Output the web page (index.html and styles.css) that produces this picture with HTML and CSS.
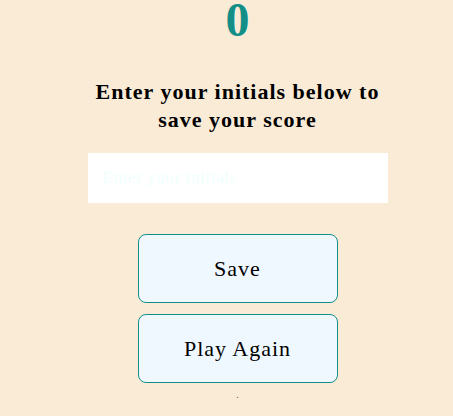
FILE: index.html
```html
<!DOCTYPE html>
<html>
<head>
<meta charset="utf-8">
<link rel="stylesheet" href="styles.css">
</head>
<body>
<main class="end-screen">
  <div class="score">0</div>
  <h2 class="prompt">Enter your initials below to save your score</h2>
  <input class="initials" type="text" placeholder="Enter your initials">
  <div class="actions">
    <button class="btn">Save</button>
    <button class="btn">Play Again</button>
  </div>
  <div class="dot">.</div>
</main>
</body>
</html>
```

FILE: styles.css
```css
html, body {
  margin: 0;
  padding: 0;
  background: #faebd7;
}
body {
  font-family: "Liberation Serif", "Times New Roman", serif;
  color: #000;
}
.end-screen {
  display: flex;
  flex-direction: column;
  align-items: center;
  padding-left: 22px;
}
.score {
  font-size: 48px;
  font-weight: bold;
  color: #138f88;
  line-height: 40px;
  margin-top: 0;
}
.prompt {
  margin: 38px 0 0;
  width: 300px;
  text-align: center;
  font-size: 22px;
  letter-spacing: 1px;
  line-height: 28px;
  font-weight: bold;
}
.initials {
  margin-top: 19px;
  width: 300px;
  height: 50px;
  box-sizing: border-box;
  border: none;
  background: #fff;
  padding: 0 15px;
  font-family: inherit;
  font-size: 17px;
  letter-spacing: 0.6px;
  outline: none;
}
.initials::placeholder {
  color: #f0fffe;
}
.actions {
  margin-top: 31px;
  display: flex;
  flex-direction: column;
  gap: 11px;
}
.btn {
  width: 200px;
  height: 69px;
  box-sizing: border-box;
  border: 1px solid #138f88;
  border-radius: 8px;
  background: #f0f8ff;
  font-family: inherit;
  font-size: 22px;
  letter-spacing: 1px;
  color: #000;
}
.dot {
  font-size: 10px;
  line-height: 12px;
  margin-top: 6px;
  color: #555;
}
```
